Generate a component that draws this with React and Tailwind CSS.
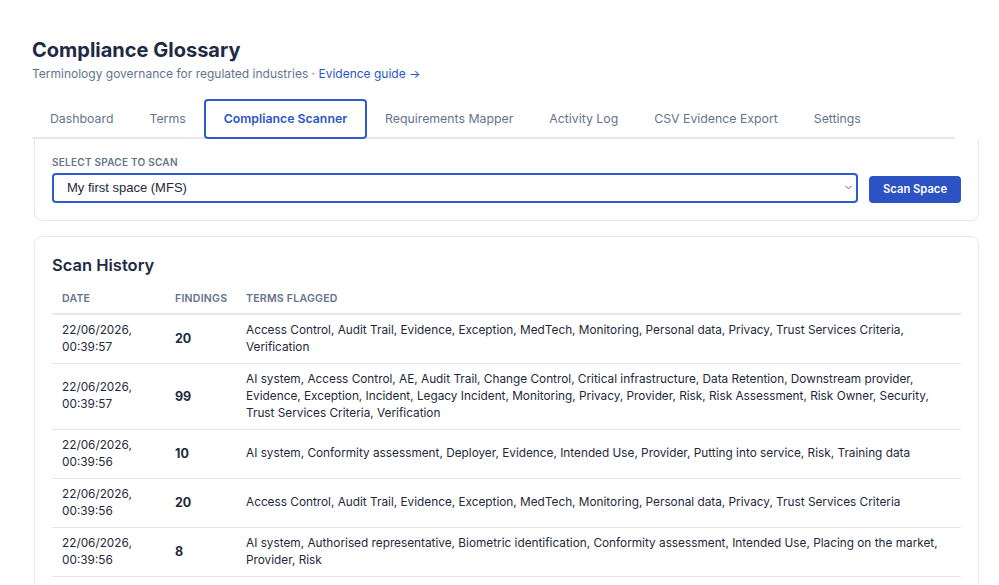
import { ChevronDown } from 'lucide-react'

const tabs = ['Dashboard', 'Terms', 'Compliance Scanner', 'Requirements Mapper', 'Activity Log', 'CSV Evidence Export', 'Settings']

const scans = [
  {
    date: '22/06/2026,', time: '00:39:57', findings: 20,
    terms: 'Access Control, Audit Trail, Evidence, Exception, MedTech, Monitoring, Personal data, Privacy, Trust Services Criteria, Verification',
  },
  {
    date: '22/06/2026,', time: '00:39:57', findings: 99,
    terms: 'AI system, Access Control, AE, Audit Trail, Change Control, Critical infrastructure, Data Retention, Downstream provider, Evidence, Exception, Incident, Legacy Incident, Monitoring, Privacy, Provider, Risk, Risk Assessment, Risk Owner, Security, Trust Services Criteria, Verification',
  },
  {
    date: '22/06/2026,', time: '00:39:56', findings: 10,
    terms: 'AI system, Conformity assessment, Deployer, Evidence, Intended Use, Provider, Putting into service, Risk, Training data',
  },
  {
    date: '22/06/2026,', time: '00:39:56', findings: 20,
    terms: 'Access Control, Audit Trail, Evidence, Exception, MedTech, Monitoring, Personal data, Privacy, Trust Services Criteria',
  },
  {
    date: '22/06/2026,', time: '00:39:56', findings: 8,
    terms: 'AI system, Authorised representative, Biometric identification, Conformity assessment, Intended Use, Placing on the market, Provider, Risk',
  },
]

const App = () => {
  return (
    <div className="h-[585px] overflow-hidden bg-white font-['Inter',sans-serif] text-[#1e293b] pl-8 pt-[36px]">

      <h1 className="text-[20px] font-bold leading-7 text-[#1e2a44]">Compliance Glossary</h1>
      <p className="text-[12px] text-[#64748b] leading-5">
        Terminology governance for regulated industries ·{' '}
        <a href="#" className="text-[#2b55c9]">Evidence guide →</a>
      </p>

      <div className="flex w-[923px] border-b-2 border-[#e5e7eb] mt-[15px]">
        {tabs.map(tab => (
          <button
            key={tab}
            className={
              tab === 'Compliance Scanner'
                ? 'h-[40px] -mb-[2px] px-[18px] border-2 border-[#2f5bd0] rounded-[4px] text-[12.3px] font-semibold text-[#2b55c9]'
                : 'h-[40px] -mb-[2px] px-[18px] text-[12.3px] text-[#64748b]'
            }
          >
            {tab}
          </button>
        ))}
      </div>

      <div className="ml-[2px] w-[945px] border border-t-0 border-[#e5e7eb] rounded-b-lg px-[17px] pt-[15px] pb-[17px]">
        <label className="block text-[10px] font-semibold tracking-wide uppercase text-[#64748b] leading-4">
          Select space to scan
        </label>
        <div className="flex items-center gap-[11px] mt-[3px]">
          <div className="relative flex-1">
            <div className="h-[30px] border-2 border-[#2f5bd0] rounded-[4px] flex items-center pl-[13px] font-['Liberation_Sans',sans-serif] text-[13px] text-[#1e293b]">
              My first space (MFS)
            </div>
            <ChevronDown size={11} strokeWidth={2} className="absolute right-[4px] top-[9px] text-[#475569]" />
          </div>
          <button className="h-[27px] px-[14px] mt-[3px] bg-[#2d52c4] text-white text-[11.2px] font-semibold rounded-[4px]">
            Scan Space
          </button>
        </div>
      </div>

      <div className="ml-[2px] mt-[15px] w-[945px] border border-[#e5e7eb] rounded-lg px-[17px] pt-[16px] pb-[24px]">
        <h2 className="text-[16.5px] font-semibold leading-6 text-[#1e2a44]">Scan History</h2>
        <table className="w-full mt-[8px] border-collapse text-left">
          <thead>
            <tr className="border-b-2 border-[#e5e7eb]">
              <th className="w-[113px] pl-[10px] py-[6px] text-[10.5px] font-semibold tracking-wide uppercase text-[#64748b]">Date</th>
              <th className="w-[71px] pl-[10px] py-[6px] text-[10.5px] font-semibold tracking-wide uppercase text-[#64748b]">Findings</th>
              <th className="pl-[10px] py-[6px] text-[10.5px] font-semibold tracking-wide uppercase text-[#64748b]">Terms Flagged</th>
            </tr>
          </thead>
          <tbody>
            {scans.map((scan, i) => (
              <tr key={i} className="border-b border-[#e5e7eb] text-[11.8px] leading-[17px] text-[#1e293b]">
                <td className="pl-[10px] pr-[10px] py-[7px] align-middle">
                  {scan.date}<br />{scan.time}
                </td>
                <td className="pl-[10px] py-[7px] align-middle font-bold text-[12.5px]">{scan.findings}</td>
                <td className="pl-[10px] pr-[10px] py-[7px] align-middle">{scan.terms}</td>
              </tr>
            ))}
          </tbody>
        </table>
      </div>
    </div>
  )
}

export default App
